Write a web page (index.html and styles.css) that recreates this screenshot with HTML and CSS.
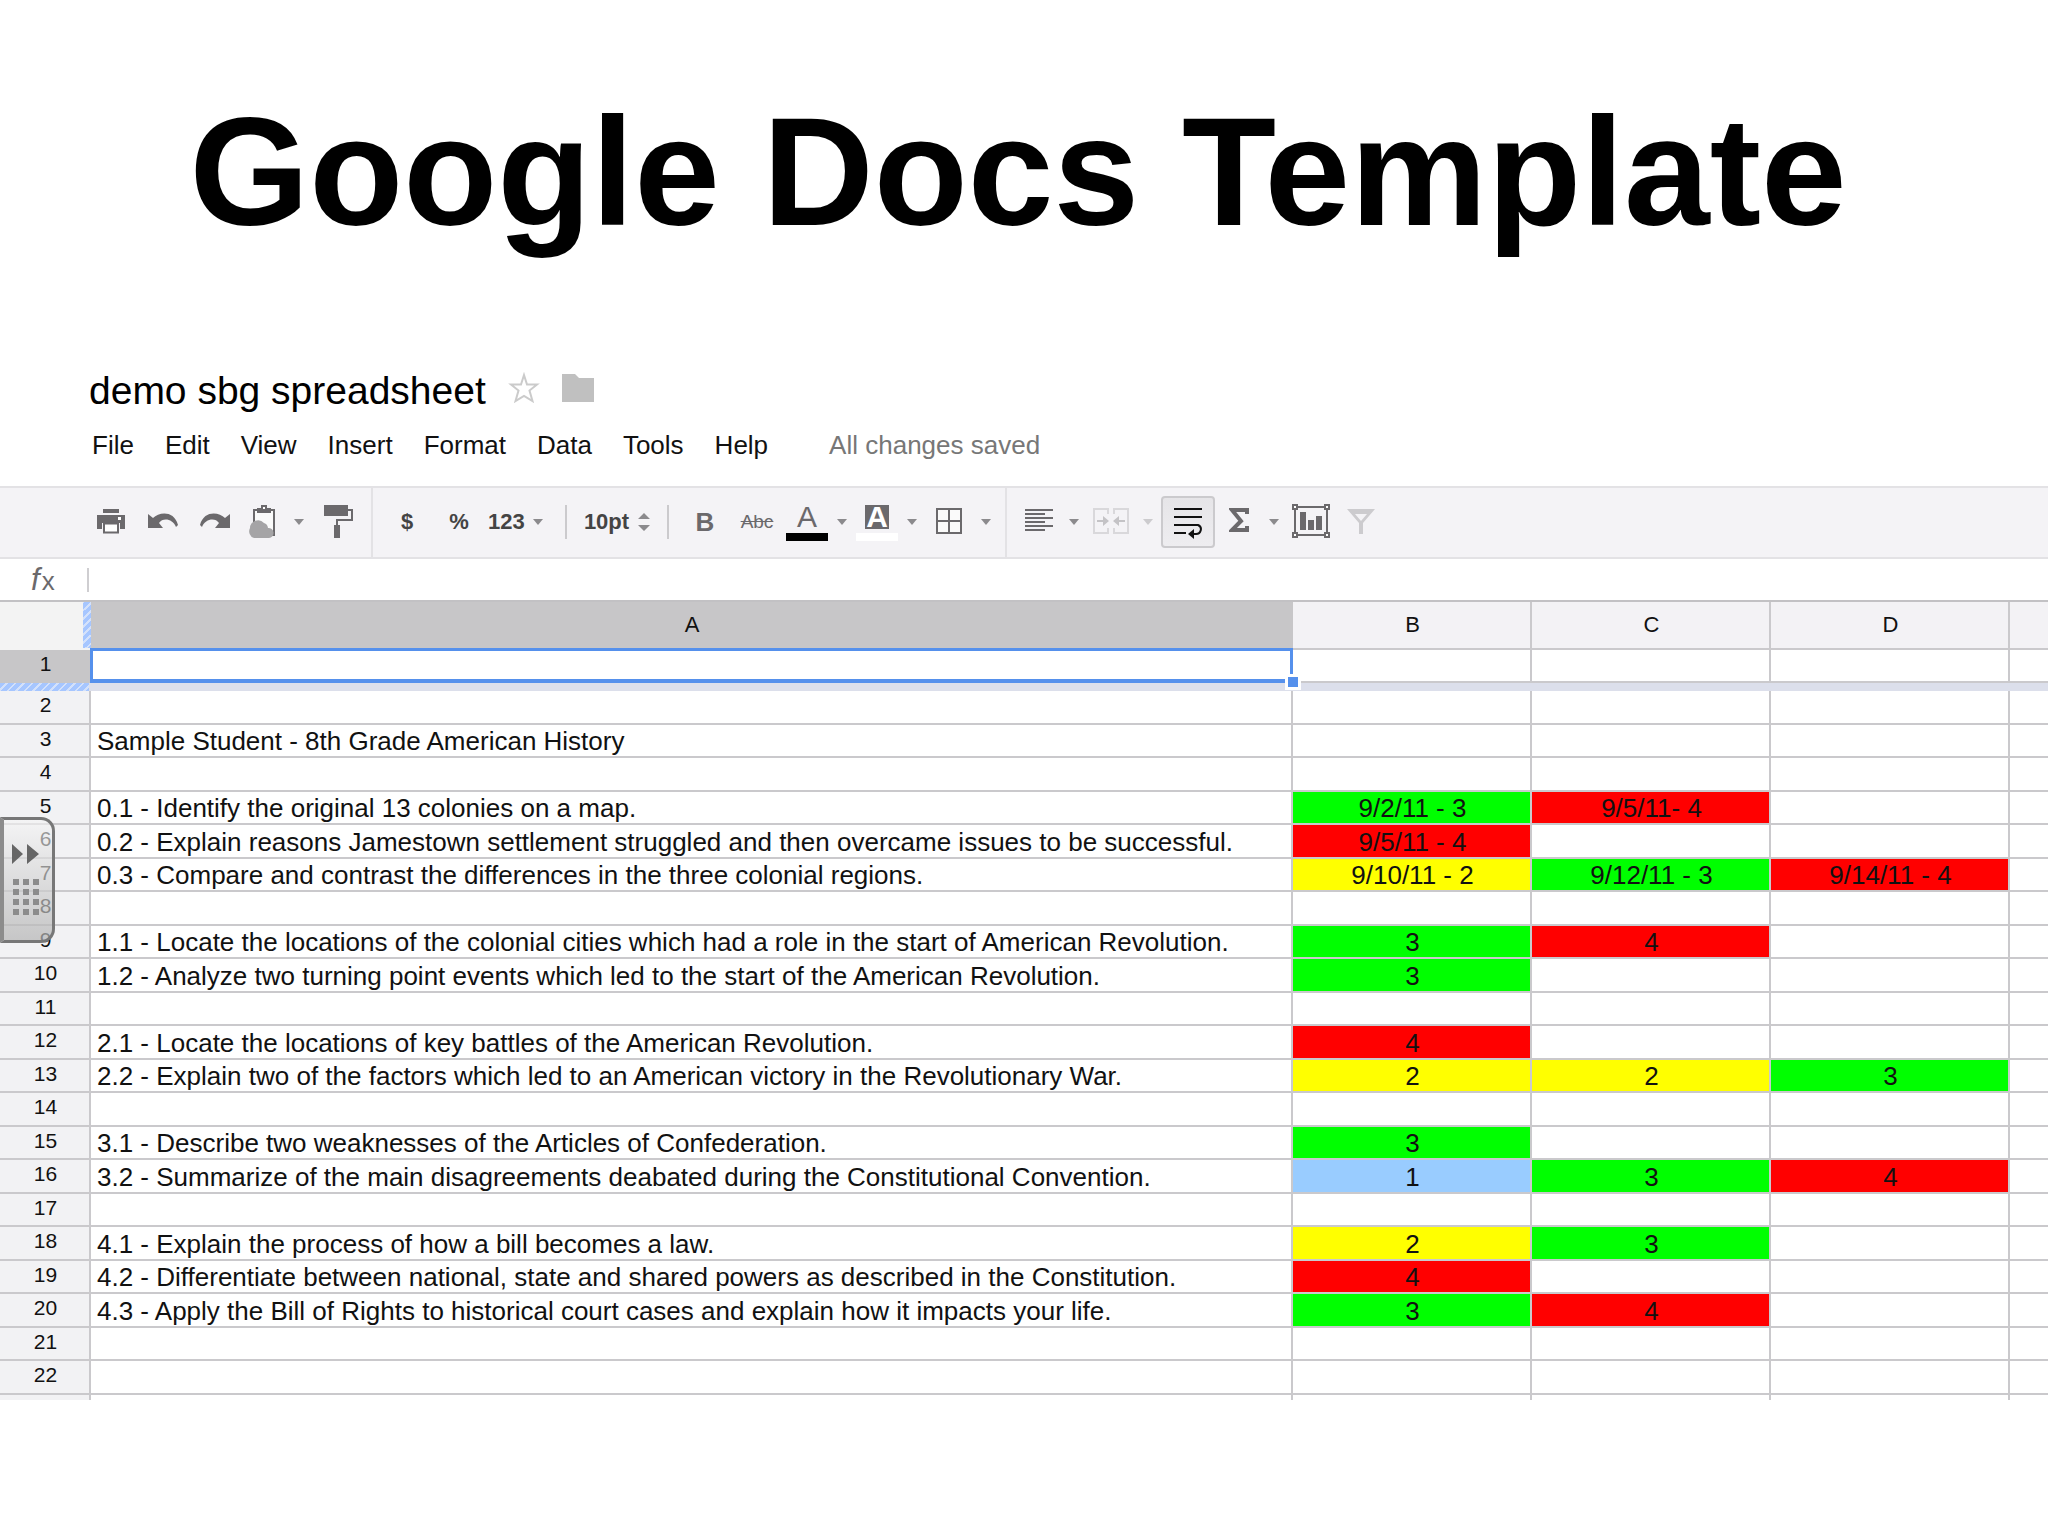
FILE: index.html
```html
<!DOCTYPE html>
<html lang="en">
<head>
<meta charset="utf-8">
<title>Google Docs Template</title>
<link rel="stylesheet" href="styles.css">
</head>
<body>
<h1 class="slide-title">Google Docs Template</h1>
<main class="sheet">
  <header class="doc-head">
    <div class="doc-name">
      <h2 class="doc-title">demo sbg spreadsheet</h2>
      <button class="plain" aria-label="Star"><svg width="32" height="32" viewBox="0 0 32 32"><path d="M16 3l3 9.500h10l-7.500 6 3 10.500-8.500-5-8.500 5 3-10.500L3 12.500h10z" fill="#fff" stroke="#cbcbcb" stroke-width="2"/></svg></button>
      <button class="plain" aria-label="Move to folder"><svg width="32" height="28" viewBox="0 0 32 28"><path d="M0 0h13l4 4h15v24H0z" fill="#c0c0c0"/></svg></button>
    </div>
    <nav class="menu">
      <button class="plain">File</button>
      <button class="plain">Edit</button>
      <button class="plain">View</button>
      <button class="plain">Insert</button>
      <button class="plain">Format</button>
      <button class="plain">Data</button>
      <button class="plain">Tools</button>
      <button class="plain">Help</button>
      <span class="saved">All changes saved</span>
    </nav>
  </header>

  <div class="toolbar" role="toolbar">
    <div class="group group-first">
      <button class="tool" aria-label="Print"><svg width="28" height="36" viewBox="0 0 28 36"><path d="M6 5h16v4H6zM0 11h28v14h-5v-6H5v6H0z" fill="#6b696c"/><path d="M7 19.500h14v9H7z" fill="#fff" stroke="#6b696c" stroke-width="2"/><path d="M21 13h3v3h-3z" fill="#fff"/></svg></button>
      <button class="tool" aria-label="Undo"><svg width="30" height="36" viewBox="0 0 30 36"><path d="M0 10l5 4c6-6 21-8 25 7l-2 2c-3-8-13-10-17-4l4 5H0z" fill="#6b696c"/></svg></button>
      <button class="tool" aria-label="Redo"><svg width="30" height="36" viewBox="0 0 30 36"><path d="M30 10l-5 4c-6-6-21-8-25 7l2 2c3-8 13-10 17-4l-4 5h15z" fill="#6b696c"/></svg></button>
      <button class="tool tool-small" aria-label="Web clipboard"><svg width="28" height="36" viewBox="0 0 28 36"><path d="M5 6h20v25H5z" fill="#fafafa" stroke="#6b696c" stroke-width="2"/><path d="M8 4h4V1h6v3h4v5H8z" fill="#6b696c"/><path d="M14 3h2v2h-2z" fill="#fff"/><path d="M5 34a7 7 0 0 1-4-10 8 8 0 0 1 14-5 6 6 0 0 1 4 5 5 5 0 0 1 1 10z" fill="#a5a4a6"/></svg></button>
      <button class="caret caret-wide" aria-label="Clipboard options"></button>
      <button class="tool" aria-label="Paint format"><svg width="30" height="36" viewBox="0 0 30 36"><path d="M0 1h24v11H0zM10 21h6v13h-6z" fill="#6b696c"/><path d="M24 6h4v10H13v5" fill="none" stroke="#6b696c" stroke-width="2"/></svg></button>
    </div>
    <div class="group">
      <button class="tool">$</button>
      <button class="tool">%</button>
      <button class="tool tool-number">123<span class="caret-mark"></span></button>
      <span class="rule"></span>
      <button class="tool tool-size">10pt<svg width="12" height="20" viewBox="0 0 12 20"><path d="M0 7l6-6 6 6zM0 13h12l-6 6z" fill="#8b8a8d"/></svg></button>
      <span class="rule rule-gap"></span>
      <button class="tool tool-bold" aria-label="Bold">B</button>
      <button class="tool tool-strike" aria-label="Strikethrough">Abc</button>
      <button class="tool tool-mid tool-color" aria-label="Text color"><span class="glyph">A</span><span class="swatch swatch-black"></span></button>
      <button class="caret" aria-label="Text color options"></button>
      <button class="tool tool-mid tool-color" aria-label="Fill color"><span class="glyph glyph-fill">A</span><span class="swatch swatch-white"></span></button>
      <button class="caret" aria-label="Fill color options"></button>
      <button class="tool" aria-label="Borders"><svg width="26" height="36" viewBox="0 0 26 36"><path d="M1 5h24v24H1zM13 5v24M1 17h24" fill="#fafafa" stroke="#6b696c" stroke-width="2"/></svg></button>
      <button class="caret" aria-label="Border options"></button>
    </div>
    <div class="group group-last">
      <button class="tool tool-mid" aria-label="Align"><svg width="28" height="36" viewBox="0 0 28 36"><path d="M0 6h28M0 10h20M0 14h28M0 18h20M0 22h28M0 26h20" stroke="#6b696c" stroke-width="2"/></svg></button>
      <button class="caret" aria-label="Align options"></button>
      <button class="tool" aria-label="Merge cells" disabled><svg width="36" height="36" viewBox="0 0 36 36"><path d="M15 10V5H1v24h14v-5M21 10V5h14v24H21v-5" fill="none" stroke="#d9d8db" stroke-width="2"/><path d="M4 17h6M26 17h6" stroke="#c4c3c6" stroke-width="2"/><path d="M10 12l6 5-6 5zM26 12l-6 5 6 5z" fill="#c4c3c6"/></svg></button>
      <button class="caret caret-off" aria-label="Merge options" disabled></button>
      <button class="tool tool-active" aria-label="Wrap text"><svg width="28" height="36" viewBox="0 0 28 36"><path d="M0 5h28M0 13h28M0 21h24c5 2 3 9-2 9h-5M0 29h12" fill="none" stroke="#111" stroke-width="2"/><path d="M14 30l6-5v10z" fill="#111"/></svg></button>
      <button class="tool tool-mid" aria-label="Functions"><svg width="20" height="36" viewBox="0 0 20 36"><path d="M18 10V6H3l9 11-9 9h15v-4" fill="none" stroke="#6b696c" stroke-width="4"/></svg></button>
      <button class="caret" aria-label="Function list"></button>
      <button class="tool" aria-label="Insert chart"><svg width="38" height="36" viewBox="0 0 38 36"><path d="M3 3h32v28H3z" fill="none" stroke="#6b696c" stroke-width="2"/><path d="M1 1h4v4H1zM33 1h4v4h-4zM1 29h4v4H1zM33 29h4v4h-4z" fill="#fff" stroke="#6b696c" stroke-width="2"/><path d="M8 8h6v18H8zM16 16h6v10h-6zM24 12h6v14h-6z" fill="#6b696c"/></svg></button>
      <button class="tool tool-mid" aria-label="Filter" disabled><svg width="28" height="36" viewBox="0 0 28 36"><path d="M0 5h28L16 19v11h-4V19zM8 10l6 7 6-7z" fill="#cccbce" fill-rule="evenodd"/></svg></button>
    </div>
  </div>

  <div class="formula">
    <label class="fx" for="formula"><i class="fx-f">f</i>x</label>
    <input class="formula-input" id="formula" type="text">
  </div>

  <div class="grid">
    <table class="cells">
      <colgroup><col class="col-row"><col><col class="col-data"><col class="col-data"><col class="col-data"><col class="col-end"></colgroup>
      <thead>
        <tr><td class="corner"></td><th class="picked">A</th><th>B</th><th>C</th><th>D</th><th></th></tr>
      </thead>
      <tbody>
        <tr><th class="picked">1</th><td class="cursor"><span class="handle"></span></td><td></td><td></td><td></td><td></td></tr>
        <tr class="freeze"><td class="hatch"></td><td colspan="5"></td></tr>
        <tr><th>2</th><td></td><td></td><td></td><td></td><td></td></tr>
        <tr><th>3</th><td>Sample Student - 8th Grade American History</td><td></td><td></td><td></td><td></td></tr>
        <tr><th>4</th><td></td><td></td><td></td><td></td><td></td></tr>
        <tr><th>5</th><td>0.1 - Identify the original 13 colonies on a map.</td><td class="green">9/2/11 - 3</td><td class="red">9/5/11- 4</td><td></td><td></td></tr>
        <tr><th>6</th><td>0.2 - Explain reasons Jamestown settlement struggled and then overcame issues to be successful.</td><td class="red">9/5/11 - 4</td><td></td><td></td><td></td></tr>
        <tr><th>7</th><td>0.3 - Compare and contrast the differences in the three colonial regions.</td><td class="yellow">9/10/11 - 2</td><td class="green">9/12/11 - 3</td><td class="red">9/14/11 - 4</td><td></td></tr>
        <tr><th>8</th><td></td><td></td><td></td><td></td><td></td></tr>
        <tr><th>9</th><td>1.1 - Locate the locations of the colonial cities which had a role in the start of American Revolution.</td><td class="green">3</td><td class="red">4</td><td></td><td></td></tr>
        <tr><th>10</th><td>1.2 - Analyze two turning point events which led to the start of the American Revolution.</td><td class="green">3</td><td></td><td></td><td></td></tr>
        <tr><th>11</th><td></td><td></td><td></td><td></td><td></td></tr>
        <tr><th>12</th><td>2.1 - Locate the locations of key battles of the American Revolution.</td><td class="red">4</td><td></td><td></td><td></td></tr>
        <tr><th>13</th><td>2.2 - Explain two of the factors which led to an American victory in the Revolutionary War.</td><td class="yellow">2</td><td class="yellow">2</td><td class="green">3</td><td></td></tr>
        <tr><th>14</th><td></td><td></td><td></td><td></td><td></td></tr>
        <tr><th>15</th><td>3.1 - Describe two weaknesses of the Articles of Confederation.</td><td class="green">3</td><td></td><td></td><td></td></tr>
        <tr><th>16</th><td>3.2 - Summarize of the main disagreements deabated during the Constitutional Convention.</td><td class="blue">1</td><td class="green">3</td><td class="red">4</td><td></td></tr>
        <tr><th>17</th><td></td><td></td><td></td><td></td><td></td></tr>
        <tr><th>18</th><td>4.1 - Explain the process of how a bill becomes a law.</td><td class="yellow">2</td><td class="green">3</td><td></td><td></td></tr>
        <tr><th>19</th><td>4.2 - Differentiate between national, state and shared powers as described in the Constitution.</td><td class="red">4</td><td></td><td></td><td></td></tr>
        <tr><th>20</th><td>4.3 - Apply the Bill of Rights to historical court cases and explain how it impacts your life.</td><td class="green">3</td><td class="red">4</td><td></td><td></td></tr>
        <tr><th>21</th><td></td><td></td><td></td><td></td><td></td></tr>
        <tr><th>22</th><td></td><td></td><td></td><td></td><td></td></tr>
        <tr class="cut"><th></th><td></td><td></td><td></td><td></td><td></td></tr>
      </tbody>
    </table>
    <button class="side-tab" aria-label="Open side panel"><svg width="28" height="72" viewBox="0 0 28 72"><path d="M0 0l11 10L0 20zM15 0l12 10-12 10z" fill="#666"/><path d="M1 38h27M1 48h27M1 58h27M1 68h27" stroke="#8c8c8c" stroke-width="6" stroke-dasharray="6 4"/></svg></button>
  </div>
</main>
</body>
</html>
```
FILE: styles.css
```css
* {
  box-sizing: border-box;
}

body {
  margin: 0;
  background: #fff;
  color: #111;
  font-family: "Liberation Sans", Arial, sans-serif;
  font-size: 26px;
  line-height: 30px;
}

h1, h2 {
  margin: 0;
}

button {
  margin: 0;
  padding: 0;
  border: 0;
  background: none;
  color: inherit;
  font: inherit;
}

svg {
  display: block;
  flex: none;
}

.slide-title {
  padding: 84px 12px 108px 0;
  color: #000;
  font-size: 154px;
  line-height: 176px;
  text-align: center;
  white-space: nowrap;
}

.doc-head {
  padding: 0 89px 26px;
}

.doc-name {
  display: flex;
  gap: 22px;
  height: 46px;
}

.doc-name .plain {
  align-self: flex-start;
  height: 40px;
}

.doc-title {
  color: #000;
  font-size: 39px;
  font-weight: 400;
  line-height: 46px;
}

.menu {
  display: flex;
  gap: 31px;
  margin-top: 16px;
  padding-left: 3px;
}

.saved {
  margin-left: 30px;
  color: #777;
}

.toolbar {
  display: flex;
  height: 73px;
  border-top: 2px solid #e3e2e5;
  border-bottom: 2px solid #e3e2e5;
  background: #f4f3f6;
  color: #444;
  font-size: 22px;
  font-weight: 700;
}

.group {
  display: flex;
  align-items: center;
  padding: 0 8px 2px;
  border-right: 2px solid #e3e2e5;
}

.group-first {
  padding: 0 6px 2px 85px;
}

.group-last {
  border-right: 0;
}

.tool {
  display: flex;
  align-items: center;
  justify-content: center;
  width: 52px;
  height: 52px;
}

.tool-small {
  width: 44px;
}

.tool-mid {
  width: 48px;
}

.tool-number {
  justify-content: flex-start;
  gap: 8px;
  width: 80px;
  padding-left: 3px;
}

.tool-size {
  gap: 9px;
  width: 100px;
}

.tool-bold {
  color: #6b696c;
  font-size: 26px;
}

.tool-strike {
  color: #6b696c;
  font-size: 19px;
  font-weight: 400;
  text-decoration: line-through;
}

.tool-color {
  flex-direction: column;
  gap: 4px;
  padding-top: 2px;
}

.glyph {
  width: 24px;
  height: 24px;
  color: #6b696c;
  font-size: 30px;
  font-weight: 400;
  line-height: 24px;
  text-align: center;
}

.glyph-fill {
  background: #6b696c;
  color: #fff;
  font-weight: 700;
}

.swatch {
  width: 42px;
  height: 8px;
}

.swatch-black {
  background: #000;
}

.swatch-white {
  background: #fff;
}

.rule {
  width: 2px;
  height: 34px;
  background: #cbcacd;
}

.rule-gap {
  margin-right: 10px;
}

.caret {
  display: flex;
  justify-content: center;
  width: 22px;
}

.caret-wide {
  width: 28px;
}

.caret::before,
.caret-mark {
  content: "";
  border: 5px solid transparent;
  border-top: 6px solid #8b8a8d;
  border-bottom: 0;
}

.caret-off::before {
  border-top-color: #cccbce;
}

.tool-active {
  width: 54px;
  margin-left: 2px;
  border: 2px solid #cbcacd;
  border-radius: 4px;
  background: linear-gradient(#e6e5e8, #eeedf0);
}

.formula {
  display: flex;
  align-items: center;
  height: 43px;
  border-bottom: 2px solid #c2c1c4;
}

.fx {
  width: 89px;
  height: 24px;
  padding-left: 31px;
  border-right: 2px solid #cfced1;
  color: #6b696c;
  font-size: 26px;
  line-height: 24px;
}

.fx-f {
  margin-right: 2px;
  font-size: 31px;
}

.formula-input {
  flex: 1;
  min-width: 0;
  height: 36px;
  padding: 0 8px;
  border: 0;
  outline: 0;
  background: none;
  font: inherit;
}

.grid {
  position: relative;
}

.cells {
  width: 100%;
  table-layout: fixed;
  border-spacing: 0;
}

.col-row {
  width: 91px;
}

.col-data {
  width: 239px;
}

.col-end {
  width: 38px;
}

.cells td,
.cells th {
  padding: 0 0 0 2px;
  border-right: 2px solid #cac9cc;
  border-bottom: 2px solid #cac9cc;
  white-space: nowrap;
}

.cells tr > :last-child {
  border-right: 0;
}

.cells thead th {
  height: 48px;
  background: #f3f2f5;
  font-size: 22px;
  font-weight: 400;
}

.cells .corner {
  border-right: 8px solid #b4cdfa;
  border-bottom-color: #f3f3f3;
  border-image: repeating-linear-gradient(135deg, #a6c6ff 0 4px, #d3e1fb 4px 6px) 0 8 0 0;
  background: #f3f3f3;
}

.cells tbody tr {
  height: 33px;
}

.cells tbody tr:nth-child(odd) {
  height: 34px;
}

.cells tbody tr:first-child {
  height: 33px;
}

.cells tbody th {
  background: #f2f2f4;
  font-size: 21px;
  font-weight: 400;
  line-height: 27px;
  vertical-align: top;
}

.cells tbody td {
  text-align: center;
  vertical-align: bottom;
}

.cells tbody td:nth-child(2) {
  padding-left: 6px;
  text-align: left;
}

.cells .picked {
  border-color: #c7c6c8;
  background: #c7c6c8;
}

.cells tbody .freeze {
  height: 8px;
}

.cells .freeze td {
  height: 8px;
  border: 0;
  background: #dcdfeb;
}

.cells .freeze .hatch {
  border-right: 2px solid #dcdfeb;
  background: repeating-linear-gradient(135deg, #a6c6ff 0 4px, #d3e1fb 4px 6px);
}

.cells tbody .cut {
  height: 5px;
}

.cells .cut > * {
  height: 5px;
  border-bottom: 0;
  line-height: 4px;
}

.green {
  background: #0f0;
}

.red {
  background: #f00;
}

.yellow {
  background: #ff0;
}

.blue {
  background: #9cf;
}

.cursor {
  position: relative;
}

.cursor::after {
  content: "";
  position: absolute;
  inset: -2px -2px -2px -1px;
  border: 3px solid #5590ec;
  border-bottom-width: 4px;
}

.handle {
  position: absolute;
  right: -10px;
  bottom: -9px;
  z-index: 1;
  width: 16px;
  height: 16px;
  border: 3px solid #fff;
  background: #5590ec;
}

.side-tab {
  position: absolute;
  top: 215px;
  left: 0;
  width: 55px;
  height: 126px;
  padding-left: 8px;
  border: 3px solid #777;
  border-left: 4px solid #8c8c8c;
  border-radius: 0 14px 14px 0;
  background: linear-gradient(rgba(245, 245, 245, 0.6), rgba(180, 180, 180, 0.7));
}
```
